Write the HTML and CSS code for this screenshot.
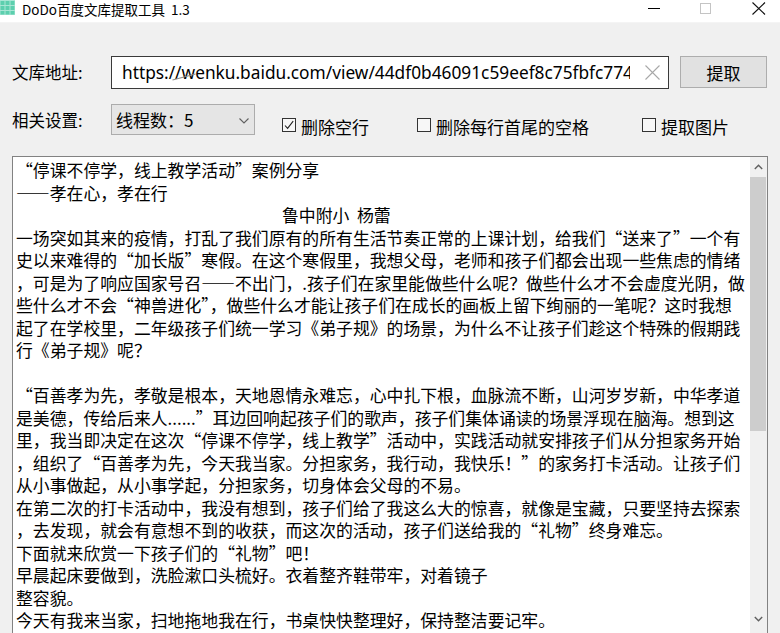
FILE: index.html
```html
<!DOCTYPE html>
<html lang="zh-CN">
<head>
<meta charset="utf-8">
<title>DoDo百度文库提取工具 1.3</title>
<link rel="stylesheet" href="styles.css">
</head>
<body>
<div class="window">
  <div class="titlebar">
    <svg class="app-icon" width="15" height="15" viewBox="0 0 15 15">
      <rect x="0" y="0" width="15" height="15" fill="#a9e6d5"/>
      <rect x="0.5" y="1" width="4" height="4" fill="#5ccfae"/>
      <rect x="5.5" y="1" width="4" height="4" fill="#5ccfae"/>
      <rect x="10.5" y="1" width="4" height="4" fill="#5ccfae"/>
      <rect x="0.5" y="6" width="4" height="4" fill="#5ccfae"/>
      <rect x="5.5" y="6" width="4" height="4" fill="#5ccfae"/>
      <rect x="10.5" y="6" width="4" height="4" fill="#5ccfae"/>
      <rect x="0.5" y="11" width="4" height="3.5" fill="#5ccfae"/>
      <rect x="5.5" y="11" width="4" height="3.5" fill="#5ccfae"/>
      <rect x="10.5" y="11" width="4" height="3.5" fill="#5ccfae"/>
    </svg>
    <span class="title">DoDo百度文库提取工具&nbsp;&nbsp;1.3</span>
    <div class="controls">
      <svg class="ctl ctl-min" width="13" height="10" viewBox="0 0 13 10"><line x1="0" y1="8.5" x2="12" y2="8.5" stroke="#000" stroke-width="1"/></svg>
      <svg class="ctl ctl-max" width="12" height="12" viewBox="0 0 12 12"><rect x="0.5" y="0.5" width="10" height="10" fill="none" stroke="#c4c4c4" stroke-width="1"/></svg>
      <svg class="ctl ctl-close" width="14" height="13" viewBox="0 0 14 13"><path d="M0.5 0.5 L13 12.5 M13 0.5 L0.5 12.5" stroke="#111" stroke-width="1.1" fill="none"/></svg>
    </div>
  </div>

  <div class="content">
    <svg class="stray" width="24" height="8" viewBox="0 0 24 8"><line x1="0.5" y1="7" x2="23.5" y2="1" stroke="#8a8a8a" stroke-width="1.2"/></svg>

    <div class="row row-url">
      <span class="label">文库地址:</span>
      <div class="input">
        <span class="input-text">https://wenku.baidu.com/view/44df0b46091c59eef8c75fbfc774</span>
        <svg class="clear" width="15" height="15" viewBox="0 0 15 15"><path d="M0.5 0.5 L14.5 14.5 M14.5 0.5 L0.5 14.5" stroke="#a8a8a8" stroke-width="1.1" fill="none"/></svg>
      </div>
      <div class="button">提取</div>
    </div>

    <div class="row row-set">
      <span class="label label-set">相关设置:</span>
      <div class="combo">
        <span class="combo-text">线程数：5</span>
        <svg class="chev" width="11" height="6" viewBox="0 0 11 6"><polyline points="0.5,0.5 5,5 9.5,0.5" fill="none" stroke="#606060" stroke-width="1.1"/></svg>
      </div>
      <div class="checks">
        <label class="check check-a">
          <span class="box"><svg width="12" height="12" viewBox="0 0 12 12"><polyline points="2,6.5 4.6,9.4 10.2,2.2" fill="none" stroke="#222" stroke-width="1.1"/></svg></span>
          <span class="check-text">删除空行</span>
        </label>
        <label class="check check-b">
          <span class="box"></span>
          <span class="check-text">删除每行首尾的空格</span>
        </label>
        <label class="check check-c">
          <span class="box"></span>
          <span class="check-text">提取图片</span>
        </label>
      </div>
    </div>

    <div class="editor">
      <div class="text">
        <div class="line">“停课不停学，线上教学活动”案例分享</div>
        <div class="line">——孝在心，孝在行</div>
        <div class="line line-author">鲁中附小&nbsp;&nbsp;杨蕾</div>
        <div class="line">一场突如其来的疫情，打乱了我们原有的所有生活节奏正常的上课计划，给我们“送来了”一个有</div>
        <div class="line">史以来难得的“加长版”寒假。在这个寒假里，我想父母，老师和孩子们都会出现一些焦虑的情绪</div>
        <div class="line">，可是为了响应国家号召——不出门，.孩子们在家里能做些什么呢？做些什么才不会虚度光阴，做</div>
        <div class="line">些什么才不会“神兽进化”，做些什么才能让孩子们在成长的画板上留下绚丽的一笔呢？这时我想</div>
        <div class="line">起了在学校里，二年级孩子们统一学习《弟子规》的场景，为什么不让孩子们趁这个特殊的假期践</div>
        <div class="line">行《弟子规》呢？</div>
        <div class="line">&nbsp;</div>
        <div class="line">“百善孝为先，孝敬是根本，天地恩情永难忘，心中扎下根，血脉流不断，山河岁岁新，中华孝道</div>
        <div class="line">是美德，传给后来人......”耳边回响起孩子们的歌声，孩子们集体诵读的场景浮现在脑海。想到这</div>
        <div class="line">里，我当即决定在这次“停课不停学，线上教学”活动中，实践活动就安排孩子们从分担家务开始</div>
        <div class="line">，组织了“百善孝为先，今天我当家。分担家务，我行动，我快乐！”的家务打卡活动。让孩子们</div>
        <div class="line">从小事做起，从小事学起，分担家务，切身体会父母的不易。</div>
        <div class="line">在第二次的打卡活动中，我没有想到，孩子们给了我这么大的惊喜，就像是宝藏，只要坚持去探索</div>
        <div class="line">，去发现，就会有意想不到的收获，而这次的活动，孩子们送给我的“礼物”终身难忘。</div>
        <div class="line">下面就来欣赏一下孩子们的“礼物”吧！</div>
        <div class="line">早晨起床要做到，洗脸漱口头梳好。衣着整齐鞋带牢，对着镜子</div>
        <div class="line">整容貌。</div>
        <div class="line">今天有我来当家，扫地拖地我在行，书桌快快整理好，保持整洁要记牢。</div>
      </div>
      <div class="scrollbar">
        <div class="arrow arrow-up"><svg width="9" height="6" viewBox="0 0 9 6"><polyline points="0.8,5 4.5,1.2 8.2,5" fill="none" stroke="#606060" stroke-width="1.4"/></svg></div>
        <div class="track"><div class="thumb"></div></div>
        <div class="arrow arrow-down"><svg width="9" height="6" viewBox="0 0 9 6"><polyline points="0.8,1 4.5,4.8 8.2,1" fill="none" stroke="#606060" stroke-width="1.4"/></svg></div>
      </div>
    </div>
  </div>
</div>
</body>
</html>
```

FILE: styles.css
```css
html, body {
  margin: 0;
  padding: 0;
}
body {
  width: 780px;
  height: 633px;
  overflow: hidden;
  background: #f0f0f0;
  font-family: "Noto Sans CJK SC", "Noto Sans", sans-serif;
  color: #000;
}
.window {
  width: 780px;
  height: 633px;
  position: relative;
  overflow: hidden;
}

/* title bar */
.titlebar {
  height: 22px;
  background: #ffffff;
  display: flex;
  align-items: flex-start;
  border-bottom: 1px solid #f4f4f4;
}
.app-icon {
  display: block;
}
.title {
  margin-left: 7px;
  font-size: 13.5px;
  line-height: 18px;
  color: #000;
}
.controls {
  margin-left: auto;
  display: flex;
  align-items: flex-start;
}
.ctl { display: block; }
.ctl-min { margin-right: 39px; }
.ctl-max { margin-top: 3px; margin-right: 40px; }
.ctl-close { margin-top: 2px; margin-right: 14px; }

/* content */
.content {
  padding: 0 12px;
  position: relative;
}
.stray {
  position: absolute;
  left: 172px;
  top: 17px;
}
.row {
  display: flex;
  align-items: flex-start;
}
.row-url {
  margin-top: 33px;
  height: 33px;
}
.label {
  width: 99px;
  font-size: 16.5px;
  line-height: 32px;
  flex: none;
}
.input {
  width: 556px;
  height: 31px;
  border: 1px solid #3a3a3a;
  background: #fff;
  display: flex;
  align-items: center;
  flex: none;
}
.input-text {
  margin-left: 10px;
  width: 508px;
  overflow: hidden;
  white-space: nowrap;
  font-family: "Noto Sans", "Open Sans", sans-serif;
  font-size: 17.3px;
  line-height: 30px;
  color: #000;
}
.clear {
  margin-left: 15px;
  display: block;
}
.button {
  margin-left: 11px;
  width: 85px;
  height: 30px;
  border: 1px solid #adadad;
  background: #e1e1e1;
  display: flex;
  align-items: center;
  justify-content: center;
  font-size: 17px;
  flex: none;
}

.row-set {
  margin-top: 15px;
  height: 31px;
}
.label-set {
  line-height: 33px;
}
.combo {
  width: 142px;
  height: 29px;
  border: 1px solid #acacac;
  background: #e5e5e5;
  display: flex;
  align-items: center;
  flex: none;
}
.combo-text {
  margin-left: 4px;
  font-size: 17px;
  line-height: 28px;
}
.chev {
  display: block;
  margin-left: auto;
  margin-right: 4px;
  margin-top: 2px;
}
.checks {
  display: flex;
  margin-top: 13px;
  margin-left: 27px;
}
.check {
  display: flex;
  align-items: center;
  height: 16px;
}
.check-a { width: 135px; }
.check-b { width: 225px; }
.check-c { width: 120px; }
.box {
  width: 12px;
  height: 12px;
  border: 1px solid #333;
  background: #f7f7f7;
  display: flex;
  flex: none;
}
.box svg { display: block; }
.check-text {
  margin-left: 5px;
  font-size: 17px;
  line-height: 20px;
  margin-top: 3px;
}

/* editor */
.editor {
  margin-top: 21px;
  height: 520px;
  border: 1px solid #828282;
  background: #fff;
  display: flex;
}
.text {
  flex: 1;
  padding: 2px 0 0 3px;
  overflow: hidden;
}
.line {
  font-size: 16.85px;
  line-height: 22.5px;
  white-space: nowrap;
}
.line-author {
  padding-left: 266px;
}
.scrollbar {
  width: 17px;
  flex: none;
  background: #f0f0f0;
  display: flex;
  flex-direction: column;
  height: 476px;
}
.arrow {
  height: 17px;
  display: flex;
  align-items: center;
  justify-content: center;
  flex: none;
}
.arrow svg { display: block; }
.arrow-up { padding-top: 2px; height: 15px; }
.track {
  flex: 1;
  padding-top: 3px;
}
.thumb {
  margin: 0 1px 0 0;
  height: 254px;
  background: #cdcdcd;
}
.arrow-down { height: 17px; align-items: flex-start; padding-top: 2px; }
```
